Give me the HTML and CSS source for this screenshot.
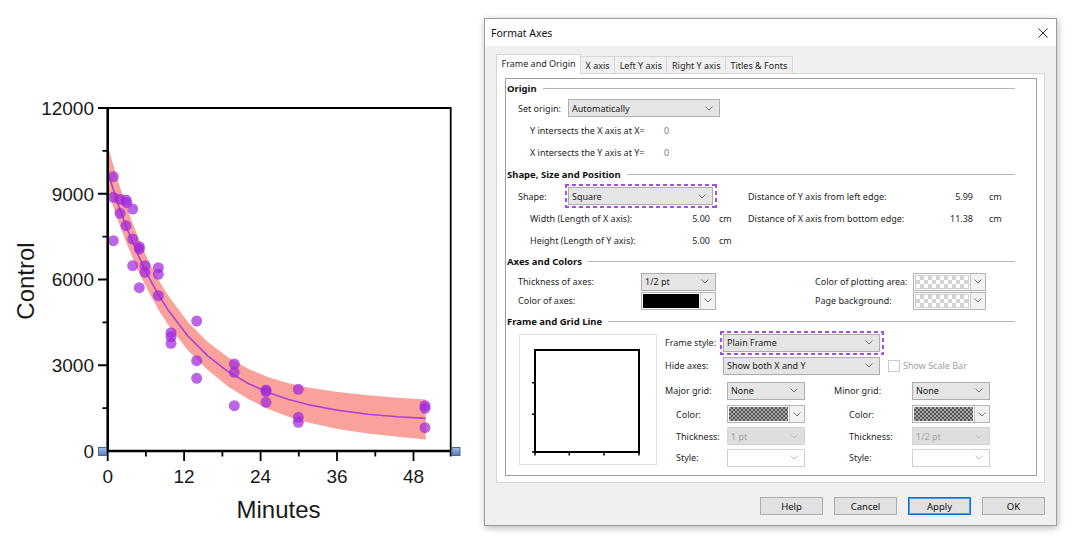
FILE: index.html
```html
<!DOCTYPE html>
<html>
<head>
<meta charset="utf-8">
<title>Format Axes</title>
<link rel="stylesheet" href="styles.css">
</head>
<body>
<div class="page">
  <svg class="chart" width="484" height="550" viewBox="0 0 484 550">
    <defs>
      <linearGradient id="hg" x1="0" y1="0" x2="0" y2="1">
        <stop offset="0" stop-color="#a9bfe6"/>
        <stop offset="1" stop-color="#5878b8"/>
      </linearGradient>
    </defs>
    <path class="band" d="M107.7 145.7 L117.7 179.9 L127.7 210.2 L137.7 236.2 L147.7 259.1 L157.7 278.4 L167.7 294.9 L187.7 321.8 L207.7 341.9 L227.7 357 L247.7 368.4 L267.7 376.9 L287.7 383 L307.7 387.6 L337.7 392.1 L367.7 395.2 L397.7 397.7 L425.7 399.4 L425.7 439.4 L397.7 436.7 L367.7 433.4 L337.7 428.9 L307.7 422.6 L287.7 416.4 L267.7 408.7 L247.7 398.8 L227.7 386.2 L207.7 369.9 L187.7 350.2 L167.7 324.2 L157.7 308.4 L147.7 290.1 L137.7 269.7 L127.7 246.2 L117.7 219.9 L107.7 189.7 Z"/>
    <polyline class="fit" points="107.7,171.7 112.7,187.6 117.7,202.9 122.7,217 127.7,230.2 137.7,254.2 147.7,275.1 157.7,293.4 167.7,309.4 187.7,335.8 207.7,355.9 227.7,371.4 247.7,383.2 267.7,392.3 287.7,399.2 307.7,404.6 337.7,410.3 367.7,414.2 397.7,416.7 425.7,418.4"/>
    <g class="pts">
      <circle cx="113.3" cy="176.7" r="5.5"/>
      <circle cx="113.3" cy="197.3" r="5.5"/>
      <circle cx="113.3" cy="240.7" r="5.5"/>
      <circle cx="120" cy="199.3" r="5.5"/>
      <circle cx="126" cy="200" r="5.5"/>
      <circle cx="126.7" cy="202.7" r="5.5"/>
      <circle cx="120" cy="213.3" r="5.5"/>
      <circle cx="132.7" cy="209" r="5.5"/>
      <circle cx="126" cy="225.7" r="5.5"/>
      <circle cx="132.7" cy="239" r="5.5"/>
      <circle cx="139.3" cy="246.7" r="5.5"/>
      <circle cx="139.3" cy="249" r="5.5"/>
      <circle cx="132.7" cy="265.7" r="5.5"/>
      <circle cx="139.3" cy="287.7" r="5.5"/>
      <circle cx="145" cy="265.7" r="5.5"/>
      <circle cx="145" cy="272.3" r="5.5"/>
      <circle cx="158.3" cy="267.7" r="5.5"/>
      <circle cx="158.3" cy="274.3" r="5.5"/>
      <circle cx="158.3" cy="295.7" r="5.5"/>
      <circle cx="171" cy="332.7" r="5.5"/>
      <circle cx="171" cy="336.7" r="5.5"/>
      <circle cx="171" cy="343.3" r="5.5"/>
      <circle cx="196.7" cy="321" r="5.5"/>
      <circle cx="196.7" cy="360.7" r="5.5"/>
      <circle cx="196.7" cy="378.3" r="5.5"/>
      <circle cx="234.3" cy="364" r="5.5"/>
      <circle cx="234.3" cy="372.3" r="5.5"/>
      <circle cx="234.3" cy="405.7" r="5.5"/>
      <circle cx="266" cy="390" r="5.5"/>
      <circle cx="266" cy="391.5" r="5.5"/>
      <circle cx="266" cy="402.3" r="5.5"/>
      <circle cx="298.3" cy="389.3" r="5.5"/>
      <circle cx="298.3" cy="417.3" r="5.5"/>
      <circle cx="298.3" cy="422.3" r="5.5"/>
      <circle cx="425" cy="405.7" r="5.5"/>
      <circle cx="425" cy="408.3" r="5.5"/>
      <circle cx="425" cy="427.7" r="5.5"/>
    </g>
    <path class="frame-thin" d="M107.7 108 H450.7 V451"/>
    <path class="frame-thick" d="M107.7 107 V451 H450.7"/>
    <path class="ticks" d="M98 108H107.7 M98 193.75H107.7 M98 279.5H107.7 M98 365.25H107.7 M98 451H107.7 M102.5 150.9H107.7 M102.5 236.6H107.7 M102.5 322.4H107.7 M102.5 408.1H107.7 M107.7 451V461 M184.1 451V461 M260.6 451V461 M337 451V461 M413.5 451V461 M145.9 451V456.5 M222.4 451V456.5 M298.8 451V456.5 M375.3 451V456.5 M450.7 451V456.5"/>
    <rect class="handle" x="98.5" y="447.5" width="8" height="8"/>
    <rect class="handle" x="452" y="447.5" width="8" height="8"/>
    <g class="ylab">
      <text x="94" y="114.8">12000</text>
      <text x="94" y="200.5">9000</text>
      <text x="94" y="286.3">6000</text>
      <text x="94" y="372">3000</text>
      <text x="94" y="457.8">0</text>
    </g>
    <g class="xlab">
      <text x="107.7" y="483">0</text>
      <text x="184.1" y="483">12</text>
      <text x="260.6" y="483">24</text>
      <text x="337" y="483">36</text>
      <text x="413.5" y="483">48</text>
    </g>
    <text class="axtitle" x="33.5" y="281" transform="rotate(-90 33.5 281)">Control</text>
    <text class="axtitle" x="278.5" y="518">Minutes</text>
  </svg>

  <div class="dialog">
    <div class="titlebar">
      <span class="title">Format Axes</span>
      <svg class="close" width="10" height="10" viewBox="0 0 10 10"><path d="M0.5 0.5L9.5 9.5M9.5 0.5L0.5 9.5"/></svg>
    </div>
    <div class="dbody">
      <div class="tabs">
        <div class="tab active">Frame and Origin</div>
        <div class="tab">X axis</div>
        <div class="tab">Left Y axis</div>
        <div class="tab">Right Y axis</div>
        <div class="tab">Titles &amp; Fonts</div>
      </div>
      <div class="tabpage">
        <div class="group">
          <div class="hdr h18">Origin</div>
          <div class="row ind1">
            <span class="lbl w50">Set origin:</span>
            <div class="dd w152"><span>Automatically</span><svg class="chev" viewBox="0 0 8 5"><path d="M0.5 0.5L4 4L7.5 0.5"/></svg></div>
          </div>
          <div class="row ind2">
            <span class="lbl w134">Y intersects the X axis at X=</span><span class="muted">0</span>
          </div>
          <div class="row ind2">
            <span class="lbl w134">X intersects the Y axis at Y=</span><span class="muted">0</span>
          </div>

          <div class="hdr">Shape, Size and Position</div>
          <div class="shape-grid">
            <div class="cell ind1">
              <span class="lbl w50">Shape:</span>
              <div class="dd w145 hl"><span>Square</span><svg class="chev" viewBox="0 0 8 5"><path d="M0.5 0.5L4 4L7.5 0.5"/></svg></div>
            </div>
            <div class="cell">
              <span class="lbl w200">Distance of Y axis from left edge:</span><span class="num w25">5.99</span><span class="unit u16">cm</span>
            </div>
            <div class="cell ind2">
              <span class="lbl w160">Width (Length of X axis):</span><span class="num w20">5.00</span><span class="unit u9">cm</span>
            </div>
            <div class="cell">
              <span class="lbl w200">Distance of X axis from bottom edge:</span><span class="num w25">11.38</span><span class="unit u16">cm</span>
            </div>
            <div class="cell ind2">
              <span class="lbl w160">Height (Length of Y axis):</span><span class="num w20">5.00</span><span class="unit u9">cm</span>
            </div>
            <div class="cell"></div>
          </div>

          <div class="hdr h21">Axes and Colors</div>
          <div class="axes-grid">
            <div class="cell ind1">
              <span class="lbl w123">Thickness of axes:</span>
              <div class="dd w75"><span>1/2 pt</span><svg class="chev" viewBox="0 0 8 5"><path d="M0.5 0.5L4 4L7.5 0.5"/></svg></div>
            </div>
            <div class="cell">
              <span class="lbl w98">Color of plotting area:</span>
              <div class="sw w73"><span class="fill light"></span><span class="swbtn"><svg class="chev" viewBox="0 0 8 5"><path d="M0.5 0.5L4 4L7.5 0.5"/></svg></span></div>
            </div>
            <div class="cell ind1">
              <span class="lbl w123">Color of axes:</span>
              <div class="sw w75"><span class="fill black"></span><span class="swbtn"><svg class="chev" viewBox="0 0 8 5"><path d="M0.5 0.5L4 4L7.5 0.5"/></svg></span></div>
            </div>
            <div class="cell">
              <span class="lbl w98">Page background:</span>
              <div class="sw w73"><span class="fill light"></span><span class="swbtn"><svg class="chev" viewBox="0 0 8 5"><path d="M0.5 0.5L4 4L7.5 0.5"/></svg></span></div>
            </div>
          </div>

          <div class="hdr">Frame and Grid Line</div>
          <div class="frame">
            <div class="preview">
              <svg width="136" height="129" viewBox="0 0 136 129">
                <rect class="pv-box" x="15" y="15" width="104" height="102"/>
                <path class="pv-tick" d="M12 47.7H15 M12 79.3H15 M12 117H15 M15 117V120.5 M49.3 117V120.5 M84 117V120.5 M119 117V120.5"/>
              </svg>
            </div>
            <div class="fcol">
              <div class="frow r21">
                <span class="lbl w58">Frame style:</span>
                <div class="dd w157 hl"><span>Plain Frame</span><svg class="chev" viewBox="0 0 8 5"><path d="M0.5 0.5L4 4L7.5 0.5"/></svg></div>
              </div>
              <div class="frow r25">
                <span class="lbl w58">Hide axes:</span>
                <div class="dd w157"><span>Show both X and Y</span><svg class="chev" viewBox="0 0 8 5"><path d="M0.5 0.5L4 4L7.5 0.5"/></svg></div>
                <span class="check"></span><span class="muted2">Show Scale Bar</span>
              </div>
              <div class="gridset">
                <span class="lbl">Major grid:</span>
                <div class="dd"><span>None</span><svg class="chev" viewBox="0 0 8 5"><path d="M0.5 0.5L4 4L7.5 0.5"/></svg></div>
                <span></span>
                <span class="lbl">Minor grid:</span>
                <div class="dd"><span>None</span><svg class="chev" viewBox="0 0 8 5"><path d="M0.5 0.5L4 4L7.5 0.5"/></svg></div>

                <span class="lbl sub">Color:</span>
                <div class="sw"><span class="fill dark"></span><span class="swbtn"><svg class="chev" viewBox="0 0 8 5"><path d="M0.5 0.5L4 4L7.5 0.5"/></svg></span></div>
                <span></span>
                <span class="lbl sub2">Color:</span>
                <div class="sw"><span class="fill dark"></span><span class="swbtn"><svg class="chev" viewBox="0 0 8 5"><path d="M0.5 0.5L4 4L7.5 0.5"/></svg></span></div>

                <span class="lbl sub">Thickness:</span>
                <div class="dd disabled"><span>1 pt</span><svg class="chev" viewBox="0 0 8 5"><path d="M0.5 0.5L4 4L7.5 0.5"/></svg></div>
                <span></span>
                <span class="lbl sub2">Thickness:</span>
                <div class="dd disabled"><span>1/2 pt</span><svg class="chev" viewBox="0 0 8 5"><path d="M0.5 0.5L4 4L7.5 0.5"/></svg></div>

                <span class="lbl sub">Style:</span>
                <div class="dd empty"><span></span><svg class="chev" viewBox="0 0 8 5"><path d="M0.5 0.5L4 4L7.5 0.5"/></svg></div>
                <span></span>
                <span class="lbl sub2">Style:</span>
                <div class="dd empty"><span></span><svg class="chev" viewBox="0 0 8 5"><path d="M0.5 0.5L4 4L7.5 0.5"/></svg></div>
              </div>
            </div>
          </div>
        </div>
      </div>
      <div class="buttons">
        <div class="btn">Help</div>
        <div class="btn">Cancel</div>
        <div class="btn default">Apply</div>
        <div class="btn">OK</div>
      </div>
    </div>
  </div>
</div>
</body>
</html>
```

FILE: styles.css
```css
* { box-sizing: border-box; }

html, body {
  margin: 0;
  padding: 0;
  background: #ffffff;
}

body {
  width: 1080px;
  height: 550px;
  overflow: hidden;
  font-family: "Noto Sans", "Open Sans", sans-serif;
  color: #1e1e1e;
}

.page {
  display: flex;
  align-items: flex-start;
}

/* ---------- chart ---------- */
.chart {
  flex: none;
  display: block;
}

.band { fill: #f9a29b; }
.fit { fill: none; stroke: #b040d8; stroke-width: 1.6; stroke-linejoin: round; }
.pts circle { fill: rgb(160, 40, 220); fill-opacity: 0.72; }
.frame-thin { fill: none; stroke: #000; stroke-width: 1.8; }
.frame-thick { fill: none; stroke: #000; stroke-width: 2.6; }
.ticks { fill: none; stroke: #000; stroke-width: 1.8; }
.handle { fill: url(#hg); stroke: #4a66a0; stroke-width: 1; }

.ylab text, .xlab text, .axtitle {
  font-family: "Liberation Sans", Arial, sans-serif;
  fill: #1a1a1a;
}
.ylab text { font-size: 19px; text-anchor: end; }
.xlab text { font-size: 19px; text-anchor: middle; }
.axtitle { font-size: 24px; text-anchor: middle; }

/* ---------- dialog ---------- */
.dialog {
  flex: none;
  width: 573px;
  height: 508px;
  margin-top: 18px;
  border: 1px solid #9c9c9c;
  background: #f0f0f0;
  display: flex;
  flex-direction: column;
  box-shadow: 1px 2px 7px rgba(0, 0, 0, 0.28);
}

.titlebar {
  height: 27px;
  flex: none;
  background: #ffffff;
  display: flex;
  align-items: center;
  justify-content: space-between;
  padding: 0 8px 0 6px;
}

.title { font-size: 10.5px; color: #111; }

.close { fill: none; stroke: #333; stroke-width: 1; }

.dbody {
  flex: 1;
  display: flex;
  flex-direction: column;
  padding: 9px 11px 0 11px;
}

.tabs {
  display: flex;
  align-items: flex-end;
  height: 19px;
  margin-bottom: -1px;
  position: relative;
  z-index: 1;
}

.tab {
  height: 17px;
  margin-bottom: 1px;
  padding: 0 4.5px;
  border: 1px solid #d6d6d6;
  border-bottom: 0;
  background: #f0f0f0;
  font-size: 9px;
  display: flex;
  align-items: center;
  white-space: nowrap;
}

.tab + .tab { margin-left: -1px; }

.tab.active {
  height: 20px;
  margin-bottom: 0;
  background: #ffffff;
  padding-bottom: 2px;
}

.tabpage {
  height: 410px;
  flex: none;
  border: 1px solid #d6d6d6;
  background: #ffffff;
  padding: 4px 7px 6px 8px;
  display: flex;
}

.group {
  flex: 1;
  border: 1px solid #a0a0a0;
  display: flex;
  flex-direction: column;
  font-size: 9px;
}

.hdr {
  display: flex;
  align-items: center;
  height: 22px;
  flex: none;
  padding: 0 21px 0 1px;
  font-weight: 700;
  font-size: 9.5px;
  color: #111;
  white-space: nowrap;
}

.hdr::after {
  content: "";
  flex: 1;
  border-top: 1px solid #b4b4b4;
  margin-left: 6px;
}

.hdr.h18 { height: 18px; }
.hdr.h21 { height: 21px; }

.row {
  display: flex;
  align-items: center;
  height: 22px;
  flex: none;
}

.ind1 { padding-left: 12px; }
.ind2 { padding-left: 24px; }

.lbl { white-space: nowrap; flex: none; }
.w50 { width: 50px; }
.w58 { width: 58px; }
.w98 { width: 98px; }
.w123 { width: 123px; }
.w134 { width: 134px; }
.w160 { width: 160px; }
.w200 { width: 200px; }

.muted { color: #7c7c7c; }
.muted2 { color: #a0a0a0; margin-left: 3px; white-space: nowrap; }

.num { text-align: right; flex: none; }
.num.w20 { width: 20px; }
.num.w25 { width: 25px; }
.unit { flex: none; }
.u9 { margin-left: 9px; }
.u16 { margin-left: 16px; }

/* dropdowns */
.dd {
  height: 18px;
  flex: none;
  display: flex;
  align-items: center;
  justify-content: space-between;
  padding: 0 6px 0 3px;
  background: #e5e5e5;
  border: 1px solid #adadad;
  color: #1a1a1a;
  white-space: nowrap;
  position: relative;
}

.dd.w75 { width: 75px; }
.dd.w145 { width: 145px; }
.dd.w152 { width: 152px; }
.dd.w157 { width: 157px; }

.dd.disabled {
  background: #dedede;
  border-color: #d4d4d4;
  color: #a2a2a2;
}

.dd.empty {
  background: #ffffff;
  border-color: #d0d0d0;
}

.chev {
  width: 8px;
  height: 5px;
  flex: none;
  fill: none;
  stroke: #777;
  stroke-width: 1;
}

.dd.disabled .chev, .dd.empty .chev { stroke: #c0c0c0; }

/* dashed highlight around a selected control */
.hl::before {
  content: "";
  position: absolute;
  top: -4px;
  bottom: -4px;
  left: -4px;
  right: -5px;
  pointer-events: none;
  background:
    linear-gradient(90deg, #a64de8 60%, transparent 0) top left / 7px 2px repeat-x,
    linear-gradient(90deg, #a64de8 60%, transparent 0) bottom left / 7px 2px repeat-x,
    linear-gradient(180deg, #a64de8 60%, transparent 0) top left / 2px 7px repeat-y,
    linear-gradient(180deg, #a64de8 60%, transparent 0) top right / 2px 7px repeat-y;
}

/* colour swatch pickers */
.sw {
  height: 18px;
  flex: none;
  display: flex;
  border: 1px solid #b4b4b4;
  background: #ffffff;
}

.sw.w73 { width: 73px; }
.sw.w75 { width: 75px; }

.sw .fill { flex: 1; margin: 1px; }

.fill.black { background: #000000; }

.fill.light {
  background-color: #ffffff;
  background-image: conic-gradient(#d4d4d4 25%, #ffffff 0 50%, #d4d4d4 0 75%, #ffffff 0);
  background-size: 8px 8px;
  border: 1px solid #d0d0d0;
}

.fill.dark {
  background-color: #a8a8a8;
  background-image: conic-gradient(#555555 25%, #a8a8a8 0 50%, #555555 0 75%, #a8a8a8 0);
  background-size: 4px 4px;
}

.swbtn {
  width: 15px;
  flex: none;
  display: flex;
  align-items: center;
  justify-content: center;
  border-left: 1px solid #c4c4c4;
  background: #f2f2f2;
}

.shape-grid {
  display: grid;
  grid-template-columns: 242px 1fr;
  grid-auto-rows: 22px;
  flex: none;
}

.axes-grid {
  display: grid;
  grid-template-columns: 309px 1fr;
  grid-auto-rows: 19px;
  flex: none;
}

.cell {
  display: flex;
  align-items: center;
}

/* frame & grid */
.frame {
  flex: 1;
  display: flex;
  align-items: flex-start;
  padding-left: 13px;
}

.preview {
  width: 138px;
  height: 131px;
  margin-top: 2px;
  border: 1px solid #e2e2e2;
  flex: none;
}

.preview svg { display: block; }
.pv-box { fill: #fff; stroke: #000; stroke-width: 2; }
.pv-tick { fill: none; stroke: #000; stroke-width: 1.5; }

.fcol {
  margin-left: 8px;
  display: flex;
  flex-direction: column;
}

.frow {
  display: flex;
  align-items: center;
}

.r21 { height: 21px; }
.r25 { height: 25px; }

.check {
  width: 12px;
  height: 12px;
  margin-left: 8px;
  border: 1px solid #c8c8c8;
  background: #fff;
  flex: none;
}

.gridset {
  display: grid;
  grid-template-columns: 62px 78px 29px 78px 78px;
  grid-template-rows: 25px 22px 22px 21px;
  align-items: center;
}

.gridset .dd, .gridset .sw { width: 78px; }

.sub { padding-left: 11px; }
.sub2 { padding-left: 15px; }

/* buttons */
.buttons {
  display: flex;
  justify-content: flex-end;
  gap: 11px;
  margin-top: 14px;
}

.btn {
  width: 63px;
  height: 18px;
  display: flex;
  align-items: center;
  justify-content: center;
  background: #e1e1e1;
  border: 1px solid #adadad;
  font-size: 9.5px;
  color: #111;
}

.btn.default {
  border-color: #0a74d6;
  box-shadow: inset 0 0 0 1px #4b9be0;
}
```
